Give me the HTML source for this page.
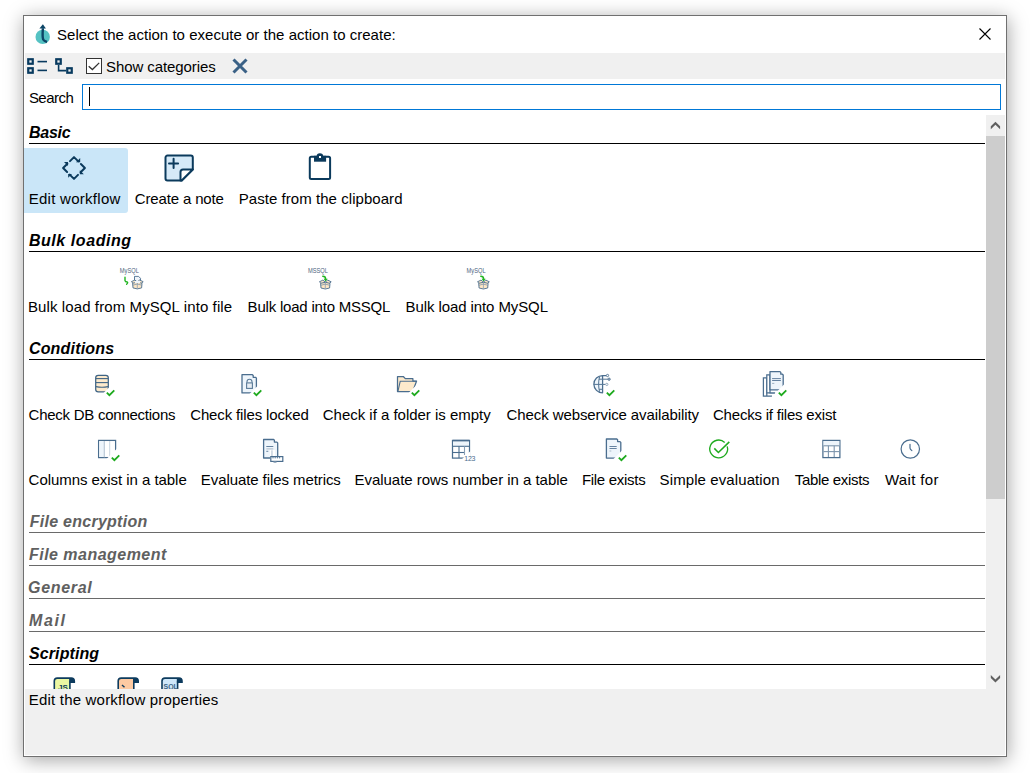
<!DOCTYPE html>
<html><head><meta charset="utf-8">
<style>
html,body{margin:0;padding:0;background:#fff;width:1030px;height:773px;overflow:hidden;}
body{position:relative;font-family:"Liberation Sans",sans-serif;font-size:15px;color:#000;}
.a{position:absolute;}
.t{position:absolute;font-size:15px;line-height:17px;white-space:nowrap;color:#000;}
.h{position:absolute;font-size:16px;line-height:17px;font-weight:bold;font-style:italic;white-space:nowrap;color:#000;}
.hg{color:#606060;}
.ul{position:absolute;left:29px;width:956px;height:1px;background:#000;}
.ulg{background:#6a6a6a;}
svg{position:absolute;overflow:visible;}
</style></head><body>
<!-- window -->
<div class="a" style="left:23px;top:15px;width:984px;height:742px;box-sizing:border-box;border:1px solid #707070;background:#fff;box-shadow:1px 3px 18px rgba(0,0,0,0.36);"></div>
<!-- inner white frame lines -->
<div class="a" style="left:24px;top:16px;width:1px;height:740px;background:#fff;"></div>
<div class="a" style="left:1005px;top:16px;width:1px;height:740px;background:#fff;"></div>
<div class="a" style="left:24px;top:755px;width:982px;height:1px;background:#fff;"></div>
<!-- title -->
<svg style="left:30px;top:20px" width="24" height="28" viewBox="0 0 24 28">
  <circle cx="12.7" cy="16.9" r="7.2" fill="#55c2c3"/>
  <path d="M12.9,8.2 C12.6,13 12.2,17 13.2,19.5 C14,21 15.5,21.6 17,22" fill="none" stroke="#0c4566" stroke-width="2.4"/>
  <path d="M9.4,8.6 L12.9,4.3 L15.9,8.6 Z" fill="#0c4566"/>
</svg>
<div class="t" style="left:57.0px;top:26px;letter-spacing:0.019px;">Select the action to execute or the action to create:</div>
<svg style="left:979px;top:28px" width="12" height="12" viewBox="0 0 12 12">
  <path d="M0.5,0.5 L11.5,11.5 M11.5,0.5 L0.5,11.5" stroke="#000" stroke-width="1.1"/>
</svg>
<!-- toolbar -->
<div class="a" style="left:25px;top:53px;width:980px;height:26px;background:#f0f0f0;"></div>
<svg style="left:25px;top:53px" width="60" height="26" viewBox="0 0 60 26">
  <g fill="none" stroke="#083a5f" stroke-width="2.2">
    <rect x="3.25" y="6.25" width="4.5" height="4.5"/>
    <rect x="3.25" y="15.25" width="4.5" height="4.5"/>
    <rect x="31.25" y="6.25" width="4.5" height="4.5"/>
    <rect x="42.25" y="15.25" width="4.5" height="4.5"/>
  </g>
  <g stroke="#083a5f" stroke-width="1.6" fill="none">
    <path d="M12.5,8.6 H22"/>
    <path d="M12.5,17.4 H22"/>
    <path d="M33.6,12 V17.6 H41"/>
  </g>
</svg>
<div class="a" style="left:86px;top:58px;width:14px;height:14px;border:1px solid #333;background:#fff;"></div>
<svg style="left:86px;top:58px" width="16" height="16" viewBox="0 0 16 16">
  <path d="M2.7,8.3 L6.4,11.5 L13.2,4.9" fill="none" stroke="#333" stroke-width="1.3"/>
</svg>
<div class="t" style="left:106.1px;top:58px;letter-spacing:-0.093px;">Show categories</div>
<svg style="left:226px;top:54px" width="28" height="24" viewBox="0 0 28 24">
  <path d="M7.5,5.5 L20.5,18.5 M20.5,5.5 L7.5,18.5" stroke="#3a6186" stroke-width="3"/>
</svg>
<!-- search -->
<div class="t" style="left:28.9px;top:89px;letter-spacing:-0.540px;">Search</div>
<div class="a" style="left:82px;top:84px;width:917px;height:24px;border:1px solid #0078d7;background:#fff;"></div>
<div class="a" style="left:89px;top:87px;width:1px;height:19px;background:#000;"></div>
<!-- scrollbar -->
<div class="a" style="left:986px;top:115px;width:19px;height:574px;background:#f0f0f0;"></div>
<div class="a" style="left:986px;top:136px;width:19px;height:363px;background:#cdcdcd;"></div>
<svg style="left:986px;top:115px" width="19" height="21" viewBox="0 0 19 21">
  <path d="M4.8,14.2 L9.45,9.7 L14.1,14.2 V11.2 L9.45,6.8 L4.8,11.2 Z" fill="#606060"/>
</svg>
<svg style="left:986px;top:668px" width="19" height="21" viewBox="0 0 19 21">
  <path d="M4.8,7.1 L9.45,11.6 L14.1,7.1 V10.1 L9.45,14.5 L4.8,10.1 Z" fill="#606060"/>
</svg>

<!-- Basic -->
<div class="h" style="left:29.0px;top:124px;letter-spacing:-0.250px;">Basic</div>
<div class="ul" style="top:143px;"></div>
<div class="a" style="left:24px;top:148px;width:104px;height:65px;background:#cae6f8;border-radius:0 3px 3px 0;"></div>
<svg style="left:58px;top:152px" width="32" height="32" viewBox="0 0 32 32">
  <g fill="none" stroke="#0b3a5c" stroke-width="2" stroke-linejoin="round" stroke-linecap="round">
    <path d="M12,9.1 L16,5.1 L20.3,9.4"/>
    <path d="M22.9,12 L26.9,16 L22.6,20.3"/>
    <path d="M20,22.9 L16,26.9 L11.7,22.6"/>
    <path d="M9.1,20 L5.1,16 L9.4,11.7"/>
  </g>
  <g fill="#0b3a5c">
    <path d="M18,10.2 L22.2,10.2 L22.2,6 Z"/>
    <path d="M21.8,22.2 L25.8,22.2 L21.8,18.2 Z"/>
    <path d="M10.2,22 L14,22 L10.2,25.8 Z"/>
    <path d="M10,10 L6,10 L10,14 Z"/>
  </g>
</svg>
<div class="t" style="left:28.7px;top:190px;letter-spacing:0.274px;">Edit workflow</div>
<svg style="left:162px;top:152px" width="32" height="32" viewBox="0 0 32 32">
  <path d="M5.5,3.5 H28.8 A2,2 0 0 1 30.8,5.5 V17.4 L19.7,28.5 H5.5 A2,2 0 0 1 3.5,26.5 V5.5 A2,2 0 0 1 5.5,3.5 Z" fill="#d6eaf8" stroke="#0b3a5c" stroke-width="2"/>
  <path d="M18.5,28.5 V20 A2.5,2.5 0 0 1 21,17.5 H30.8 L19.7,28.5 Z" fill="#fff" stroke="#0b3a5c" stroke-width="2" stroke-linejoin="round"/>
  <path d="M11.6,6.8 V15.9 M7,11.4 H16.1" stroke="#0b3a5c" stroke-width="2" stroke-linecap="round"/>
</svg>
<div class="t" style="left:134.8px;top:190px;letter-spacing:-0.151px;">Create a note</div>
<svg style="left:304px;top:152px" width="32" height="32" viewBox="0 0 32 32">
  <rect x="5.8" y="4.8" width="20.3" height="22.3" rx="1.5" fill="#fff" stroke="#0b3a5c" stroke-width="2"/>
  <rect x="10" y="3.8" width="12.1" height="5.9" fill="#0b3a5c"/>
  <circle cx="15.9" cy="4.5" r="3.3" fill="#0b3a5c"/>
  <rect x="15" y="4" width="2" height="2" fill="#fff"/>
</svg>
<div class="t" style="left:238.8px;top:190px;letter-spacing:0.048px;">Paste from the clipboard</div>

<!-- Bulk loading -->
<div class="h" style="left:28.9px;top:232px;letter-spacing:0.563px;">Bulk loading</div>
<div class="ul" style="top:251px;"></div>
<div class="t" style="left:28.0px;top:298px;letter-spacing:0.100px;">Bulk load from MySQL into file</div>
<div class="t" style="left:247.6px;top:298px;letter-spacing:-0.206px;">Bulk load into MSSQL</div>
<div class="t" style="left:405.6px;top:298px;letter-spacing:-0.095px;">Bulk load into MySQL</div>

<!-- bulk icons -->
<svg style="left:0px;top:0px" width="1030" height="300" viewBox="0 0 1030 300">
  
  <g font-family="Liberation Sans" font-size="6.6" fill="#4d6580">
    <text x="119.8" y="273.2" textLength="19" lengthAdjust="spacingAndGlyphs">MySQL</text>
    <text x="308" y="273.4" textLength="20" lengthAdjust="spacingAndGlyphs">MSSQL</text>
    <text x="466.6" y="273.4" textLength="19" lengthAdjust="spacingAndGlyphs">MySQL</text>
  </g>
  <!-- MySQL into file -->
  <path d="M125,277.2 V280.6 Q125.2,282 127.3,282 Q128.3,282.6 126.6,284.2" fill="none" stroke="#22b522" stroke-width="1.4" stroke-linecap="round"/>
  <path d="M134.5,276.4 H138.6 L140.5,278.3 V283.5 H134.5 Z" fill="#eef4fa" stroke="#4a6d8e" stroke-width="0.9"/>
  <g transform="translate(130.4,275.4)">
      <path d="M1,6.3 L4.5,4.6 L7,6.7 L3.2,8.4 Z" fill="#fde6c4" stroke="#4a6d8e" stroke-width="0.9" stroke-linejoin="round"/>
      <path d="M12.8,6.3 L9.3,4.6 L6.8,6.7 L10.6,8.4 Z" fill="#fde6c4" stroke="#4a6d8e" stroke-width="0.9" stroke-linejoin="round"/>
      <path d="M2.2,7.8 L6.9,6.8 L11.6,7.8 L11.2,12.5 L6.9,13.5 L2.6,12.5 Z" fill="#fde6c4" stroke="#4a6d8e" stroke-width="0.9" stroke-linejoin="round"/>
      <path d="M6.9,6.8 V13.5" stroke="#8aa0b6" stroke-width="0.8"/>
      <path d="M2.4,9.8 L6.9,8.6 L11.4,9.8" fill="none" stroke="#6f8aa5" stroke-width="0.7"/>
    </g>
  <path d="M134.9,281 H140.1 V283 H134.9 Z" fill="#eef4fa"/>
  <!-- MSSQL -->
  <g transform="translate(318.4,275.5)">
      <path d="M1,6.3 L4.5,4.6 L7,6.7 L3.2,8.4 Z" fill="#fde6c4" stroke="#4a6d8e" stroke-width="0.9" stroke-linejoin="round"/>
      <path d="M12.8,6.3 L9.3,4.6 L6.8,6.7 L10.6,8.4 Z" fill="#fde6c4" stroke="#4a6d8e" stroke-width="0.9" stroke-linejoin="round"/>
      <path d="M2.2,7.8 L6.9,6.8 L11.6,7.8 L11.2,12.5 L6.9,13.5 L2.6,12.5 Z" fill="#fde6c4" stroke="#4a6d8e" stroke-width="0.9" stroke-linejoin="round"/>
      <path d="M6.9,6.8 V13.5" stroke="#8aa0b6" stroke-width="0.8"/>
      <path d="M2.4,9.8 L6.9,8.6 L11.4,9.8" fill="none" stroke="#6f8aa5" stroke-width="0.7"/>
    </g>
  <path d="M322.8,276.3 Q325.6,276.3 325.6,279" fill="none" stroke="#22b522" stroke-width="1.5" stroke-linecap="round"/>
  <path d="M323.6,278.8 H327.6 L325.6,281.4 Z" fill="#22b522"/>
  <!-- MySQL -->
  <g transform="translate(476.5,275.5)">
      <path d="M1,6.3 L4.5,4.6 L7,6.7 L3.2,8.4 Z" fill="#fde6c4" stroke="#4a6d8e" stroke-width="0.9" stroke-linejoin="round"/>
      <path d="M12.8,6.3 L9.3,4.6 L6.8,6.7 L10.6,8.4 Z" fill="#fde6c4" stroke="#4a6d8e" stroke-width="0.9" stroke-linejoin="round"/>
      <path d="M2.2,7.8 L6.9,6.8 L11.6,7.8 L11.2,12.5 L6.9,13.5 L2.6,12.5 Z" fill="#fde6c4" stroke="#4a6d8e" stroke-width="0.9" stroke-linejoin="round"/>
      <path d="M6.9,6.8 V13.5" stroke="#8aa0b6" stroke-width="0.8"/>
      <path d="M2.4,9.8 L6.9,8.6 L11.4,9.8" fill="none" stroke="#6f8aa5" stroke-width="0.7"/>
    </g>
  <path d="M480.8,276.3 Q483.6,276.3 483.6,279" fill="none" stroke="#22b522" stroke-width="1.5" stroke-linecap="round"/>
  <path d="M481.6,278.8 H485.6 L483.6,281.4 Z" fill="#22b522"/>
</svg>

<!-- Conditions -->
<div class="h" style="left:28.9px;top:340px;letter-spacing:0.189px;">Conditions</div>
<div class="ul" style="top:359px;"></div>
<div class="t" style="left:28.6px;top:406px;letter-spacing:-0.253px;">Check DB connections</div>
<div class="t" style="left:190.2px;top:406px;letter-spacing:-0.136px;">Check files locked</div>
<div class="t" style="left:322.8px;top:406px;letter-spacing:-0.020px;">Check if a folder is empty</div>
<div class="t" style="left:506.5px;top:406px;letter-spacing:-0.089px;">Check webservice availability</div>
<div class="t" style="left:713.0px;top:406px;letter-spacing:-0.210px;">Checks if files exist</div>
<div class="t" style="left:28.6px;top:471px;letter-spacing:-0.048px;">Columns exist in a table</div>
<div class="t" style="left:200.8px;top:471px;letter-spacing:-0.080px;">Evaluate files metrics</div>
<div class="t" style="left:354.5px;top:471px;letter-spacing:-0.030px;">Evaluate rows number in a table</div>
<div class="t" style="left:581.9px;top:471px;letter-spacing:-0.290px;">File exists</div>
<div class="t" style="left:659.6px;top:471px;letter-spacing:0.099px;">Simple evaluation</div>
<div class="t" style="left:794.8px;top:471px;letter-spacing:-0.337px;">Table exists</div>
<div class="t" style="left:884.9px;top:471px;letter-spacing:0.342px;">Wait for</div>

<!-- condition icons row1 (box 24x24, y=373) -->
<svg style="left:90px;top:373px" width="24" height="24" viewBox="0 0 24 24">
  <g stroke="#3f6485" stroke-width="1.25" fill="#fdeacc">
    <path d="M5.7,4.7 Q5.7,2.3 8.2,2.3 H15.8 Q18.3,2.3 18.3,4.7 V16.5 Q18.3,18.9 15.8,18.9 H8.2 Q5.7,18.9 5.7,16.5 Z"/>
  </g>
  <g stroke="#3f6485" stroke-width="1.1" fill="none">
    <path d="M6,5.6 H18"/><path d="M6,9.6 H18"/><path d="M6,13.6 Q12,14.8 18,13.6"/>
  </g>
  <path d="M9.5,24 L24,9.5 V24 Z" fill="#fff"/>
  <path d="M16.8,19.6 L19.4,22.2 L24.3,17.3" fill="none" stroke="#1eaa1e" stroke-width="1.8"/>
</svg>
<svg style="left:237px;top:373px" width="24" height="24" viewBox="0 0 24 24">
  <path d="M5,1.7 H15.4 L16.2,2.5 V4.3 H18.6 L19.4,5.1 V19.9 H5 Z" fill="#eef5fb" stroke="#4a6d8e" stroke-width="1.3" stroke-linejoin="round"/>
  <path d="M10,9.8 V8.7 A2.5,2.5 0 0 1 15,8.7 V9.8" fill="none" stroke="#5a7a98" stroke-width="1.1"/>
  <rect x="9.6" y="9.9" width="5.8" height="5.5" fill="#e8eef4" stroke="#5a7a98" stroke-width="1.1"/>
  <path d="M9.5,24 L24,9.5 V24 Z" fill="#fff"/>
  <path d="M16.8,19.6 L19.4,22.2 L24.3,17.3" fill="none" stroke="#1eaa1e" stroke-width="1.8"/>
</svg>
<svg style="left:395px;top:373px" width="24" height="24" viewBox="0 0 24 24">
  <path d="M2.5,3.5 H8.3 L10.3,5.7 H17.9 V8 H21.6 L19,15 V18.5 H2.5 Z" fill="#fdeacc" stroke="#4a6d8e" stroke-width="1.25" stroke-linejoin="round"/>
  <path d="M3,18 L5.2,8.3 H21.6" fill="none" stroke="#4a6d8e" stroke-width="1.1"/>
  <path d="M9.5,24 L24,9.5 V24 Z" fill="#fff"/>
  <path d="M16.8,19.6 L19.4,22.2 L24.3,17.3" fill="none" stroke="#1eaa1e" stroke-width="1.8"/>
</svg>
<svg style="left:590px;top:373px" width="24" height="24" viewBox="0 0 24 24">
  <path d="M12.6,2.5 A8.7,8.7 0 0 0 12.6,19.9 Z" fill="#eef5fb"/>
  <g fill="none" stroke="#4a6d8e" stroke-width="1.25">
    <path d="M16.3,2.5 H12.6 A8.7,8.7 0 0 0 12.6,19.9 V2.5"/>
  </g>
  <g fill="none" stroke="#5a7a98" stroke-width="1.05">
    <path d="M9.6,3.5 Q7.6,11.2 9.6,18.8"/>
    <path d="M9,6.2 H18"/>
    <path d="M3.6,11.4 H15.6"/>
    <path d="M9,16.3 H12.6"/>
  </g>
  <circle cx="17.5" cy="2.5" r="1.15" fill="#fff" stroke="#4a6d8e" stroke-width="0.9"/>
  <circle cx="19.1" cy="6.2" r="1.2" fill="#8fa6bc" stroke="#5a7a98" stroke-width="0.8"/>
  <circle cx="16.8" cy="11.4" r="1.15" fill="#fff" stroke="#8aa0b6" stroke-width="0.9"/>
  <path d="M9.5,24 L24,9.5 V24 Z" fill="#fff"/>
  <path d="M16.8,19.6 L19.4,22.2 L24.3,17.3" fill="none" stroke="#1eaa1e" stroke-width="1.8"/>
</svg>
<svg style="left:762px;top:373px" width="24" height="24" viewBox="0 0 24 24">
  <g stroke="#4a6d8e" stroke-width="1.25" fill="#fff">
    <path d="M1.4,4.8 H4.8 V23.2 H10 V23.2 H1.4 Z"/>
    <path d="M4.8,1.9 H8 V20 H12.5 V19.9 H4.8 Z"/>
  </g>
  <path d="M8,-1.4 H18 L18.8,-0.6 V1.2 H20.4 L21.2,2 V16.8 H8 Z" fill="#eef5fb" stroke="#4a6d8e" stroke-width="1.3" stroke-linejoin="round"/>
  <g stroke="#6582a0" stroke-width="1" fill="none"><path d="M10.1,5.6 H18.9"/><path d="M10.1,7.5 H18.9"/><path d="M10.1,10.4 H12.3" stroke="#9fb1c3"/></g>
  <path d="M9.5,24 L24,9.5 V24 Z" fill="#fff"/>
  <path d="M16.8,19.6 L19.4,22.2 L24.3,17.3" fill="none" stroke="#1eaa1e" stroke-width="1.8"/>
</svg>
<!-- row 2 (y=437) -->
<svg style="left:95px;top:437px" width="24" height="24" viewBox="0 0 24 24">
  <rect x="3.6" y="3.4" width="17" height="17.2" fill="#fff" stroke="#4a6d8e" stroke-width="1.25"/>
  <rect x="4.3" y="4" width="4.6" height="16" fill="#eef5fb"/>
  <path d="M9.3,4 V20.2" stroke="#b9c8d6" stroke-width="1.2"/>
  <path d="M14.7,4 V20.2" stroke="#c9d5e0" stroke-width="1"/>
  <path d="M9.5,24 L24,9.5 V24 Z" fill="#fff"/>
  <path d="M16.8,20.6 L19.4,23.2 L24.3,18.3" fill="none" stroke="#1eaa1e" stroke-width="1.8"/>
</svg>
<svg style="left:258.6px;top:437px" width="24" height="24" viewBox="0 0 24 24">
  <path d="M4.6,2.5 H14.6 L15.4,3.3 V5.1 H17.9 L18.7,5.9 V21 H4.6 Z" fill="#eef5fb" stroke="#4a6d8e" stroke-width="1.3" stroke-linejoin="round"/>
  <g stroke="#6582a0" stroke-width="1" fill="none"><path d="M7.3,9.5 H14.3"/><path d="M7.3,11.9 H14.3" stroke="#aab9c8"/><path d="M7.3,14.3 H9.3"/></g>
  <path d="M11,13 H16 V25 H11 Z" fill="#fff"/>
  <rect x="12.2" y="13.3" width="1.5" height="6" fill="#c8d3de"/>
  <rect x="11.8" y="19.6" width="12" height="4.8" fill="#fff" stroke="#4a6d8e" stroke-width="1.2"/>
  <g stroke="#4a6d8e" stroke-width="0.9"><path d="M14,19.6 V21.4"/><path d="M16.2,19.6 V21.4"/><path d="M18.4,19.6 V21.4"/><path d="M20.6,19.6 V21.4"/></g>
  <rect x="14.5" y="24.6" width="3" height="1.4" fill="#9fb1c3"/>
</svg>
<svg style="left:449px;top:437px" width="24" height="24" viewBox="0 0 24 24">
  <rect x="3.5" y="3.4" width="17" height="17.7" fill="#fff" stroke="#4a6d8e" stroke-width="1.25"/>
  <rect x="4.1" y="4" width="15.8" height="5" fill="#eef5fb"/>
  <g stroke="#4a6d8e" stroke-width="1.1" fill="none"><path d="M3.5,9.3 H20.5"/><path d="M3.5,15.5 H16"/><path d="M10,9.3 V21"/><path d="M15.5,9.3 V18" stroke="#8aa0b6"/><path d="M3.8,3.6 H20.2" stroke-width="1.6"/></g>
  <path d="M12,23 L21.5,14 V25 H12 Z" fill="#fff"/>
  <text x="15.3" y="24.2" font-family="Liberation Sans" font-size="7" fill="#4a6d8e" letter-spacing="-0.3">123</text>
</svg>
<svg style="left:601.6px;top:437px" width="24" height="24" viewBox="0 0 24 24">
  <path d="M4.4,2 H14.8 L15.6,2.8 V4.6 H18 L18.8,5.4 V21.1 H4.4 Z" fill="#eef5fb" stroke="#4a6d8e" stroke-width="1.3" stroke-linejoin="round"/>
  <g stroke="#6582a0" stroke-width="1" fill="none"><path d="M7.5,9.5 H14.7"/><path d="M7.5,11.5 H14.7"/><path d="M7.5,14 H9.3" stroke="#aab9c8"/></g>
  <path d="M9.5,24 L24,9.5 V24 Z" fill="#fff"/>
  <path d="M16.8,20.6 L19.4,23.2 L24.3,18.3" fill="none" stroke="#1eaa1e" stroke-width="1.8"/>
</svg>
<svg style="left:707.3px;top:437px" width="24" height="24" viewBox="0 0 24 24">
  <path d="M17.7,5.4 A8.9,8.9 0 1 0 20.2,9.4" fill="none" stroke="#1eaa1e" stroke-width="1.3"/>
  <path d="M7.3,11.4 L11.4,15.5 L22.3,4.9" fill="none" stroke="#1eaa1e" stroke-width="1.5"/>
</svg>
<svg style="left:819.6px;top:437px" width="24" height="24" viewBox="0 0 24 24">
  <rect x="2.9" y="3.4" width="17" height="17.2" fill="#fff" stroke="#4a6d8e" stroke-width="1.25"/>
  <rect x="3.5" y="4" width="15.8" height="4.6" fill="#eef5fb"/>
  <g stroke="#7d95ad" stroke-width="1.1" fill="none"><path d="M3.5,8.8 H19.4"/><path d="M3.5,14.6 H19.4"/><path d="M8.4,8.8 V20"/><path d="M14.2,8.8 V20"/></g>
</svg>
<svg style="left:898.7px;top:437px" width="24" height="24" viewBox="0 0 24 24">
  <circle cx="11.3" cy="12" r="9.2" fill="#fff" stroke="#4a6d8e" stroke-width="1.2"/>
  <path d="M11,7.3 V11 Q11,12.3 12.8,13.6" fill="none" stroke="#4a6d8e" stroke-width="1.2" stroke-linecap="round"/>
</svg>

<!-- collapsed -->
<div class="h hg" style="left:29.8px;top:513px;letter-spacing:0.257px;">File encryption</div>
<div class="ul ulg" style="top:532px;"></div>
<div class="h hg" style="left:29.0px;top:546px;letter-spacing:0.471px;">File management</div>
<div class="ul ulg" style="top:565px;"></div>
<div class="h hg" style="left:28.0px;top:579px;letter-spacing:0.700px;">General</div>
<div class="ul ulg" style="top:598px;"></div>
<div class="h hg" style="left:29.0px;top:612px;letter-spacing:1.633px;">Mail</div>
<div class="ul ulg" style="top:631px;"></div>
<div class="h" style="left:29.0px;top:645px;letter-spacing:0.100px;">Scripting</div>
<div class="ul" style="top:664px;"></div>

<!-- scripting icons -->
<svg style="left:0px;top:660px" width="300" height="40" viewBox="0 660 300 40">
  
  <path d="M54.3,690 V681 A3,3 0 0 1 57.3,678 H69.5 V690 Z" fill="#ebf7a2"/>
  <g transform="translate(53.3,677.1)">
      <path d="M1,13 V4 A3,3 0 0 1 4,1 H18 A3,3 0 0 1 21,4 V5.2 H16.6 V13" fill="none" stroke="#0d3b5e" stroke-width="1.6"/>
      <path d="M15.8,1 H18 A3,3 0 0 1 21,4 V5.5 H15.8 Z" fill="#0d3b5e"/>
    </g>
  <text x="58" y="689.6" font-family="Liberation Sans" font-size="8" font-weight="bold" fill="#0d3b5e">JS</text>
  <path d="M118.2,690 V681 A3,3 0 0 1 121.2,678 H133.5 V690 Z" fill="#fdcaa2"/>
  <g transform="translate(117.2,677.1)">
      <path d="M1,13 V4 A3,3 0 0 1 4,1 H18 A3,3 0 0 1 21,4 V5.2 H16.6 V13" fill="none" stroke="#0d3b5e" stroke-width="1.6"/>
      <path d="M15.8,1 H18 A3,3 0 0 1 21,4 V5.5 H15.8 Z" fill="#0d3b5e"/>
    </g>
  <path d="M122,685 L124.5,687.3" stroke="#0d3b5e" stroke-width="1.4"/>
  <path d="M162,690 V681 A3,3 0 0 1 165,678 H177.3 V690 Z" fill="#cfe7f9"/>
  <g transform="translate(161,677.1)">
      <path d="M1,13 V4 A3,3 0 0 1 4,1 H18 A3,3 0 0 1 21,4 V5.2 H16.6 V13" fill="none" stroke="#0d3b5e" stroke-width="1.6"/>
      <path d="M15.8,1 H18 A3,3 0 0 1 21,4 V5.5 H15.8 Z" fill="#0d3b5e"/>
    </g>
  <text x="163.5" y="689.2" font-family="Liberation Sans" font-size="7" font-weight="bold" fill="#3d6485">SQL</text>
</svg>

<!-- status -->
<div class="a" style="left:25px;top:689px;width:980px;height:66px;background:#f0f0f0;"></div>
<div class="t" style="left:28.8px;top:691px;letter-spacing:0.193px;">Edit the workflow properties</div>
</body></html>
